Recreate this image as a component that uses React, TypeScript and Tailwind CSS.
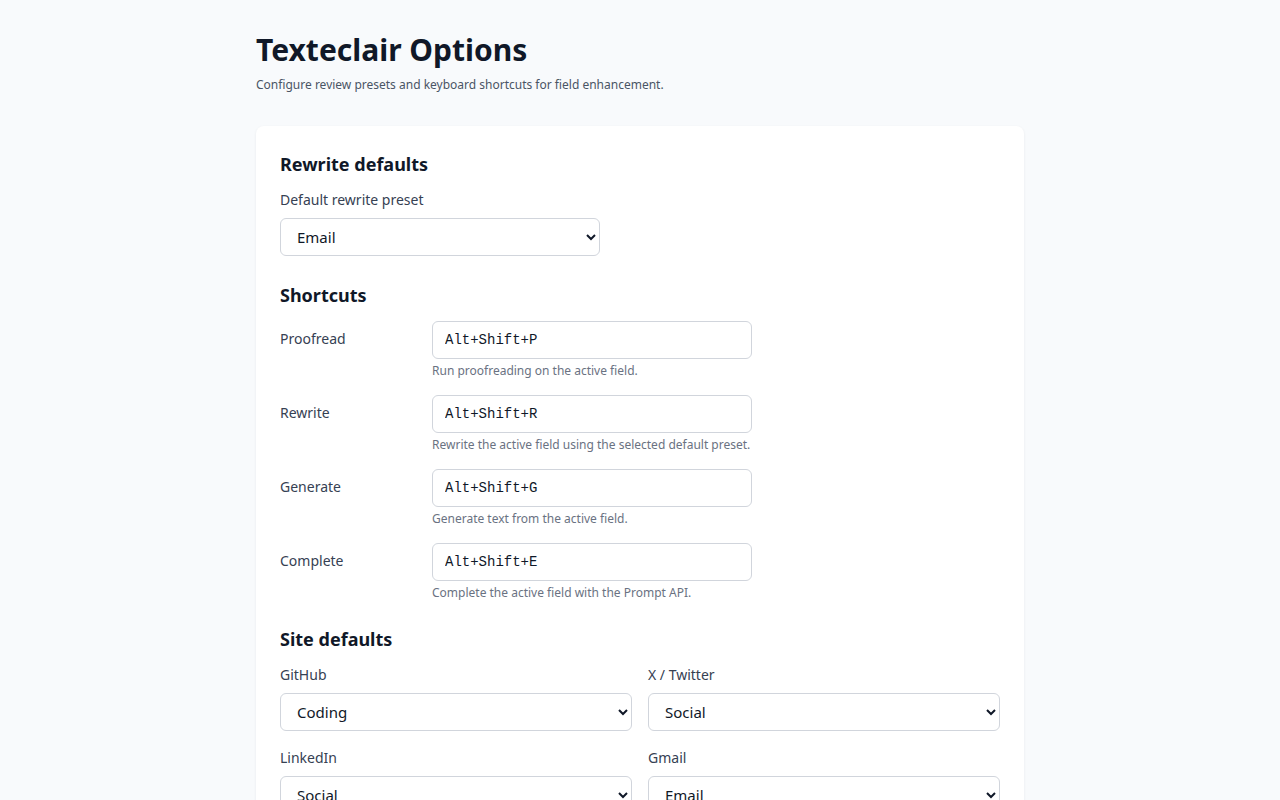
import React, { useState } from 'react';

const PRESETS = ['Email', 'Coding', 'Social', 'Formal', 'Casual'];

const SHORTCUTS = [
  { id: 'proofread', label: 'Proofread', value: 'Alt+Shift+P', help: 'Run proofreading on the active field.' },
  { id: 'rewrite', label: 'Rewrite', value: 'Alt+Shift+R', help: 'Rewrite the active field using the selected default preset.' },
  { id: 'generate', label: 'Generate', value: 'Alt+Shift+G', help: 'Generate text from the active field.' },
  { id: 'complete', label: 'Complete', value: 'Alt+Shift+E', help: 'Complete the active field with the Prompt API.' },
];

const SITES = [
  { id: 'github', label: 'GitHub', value: 'Coding' },
  { id: 'twitter', label: 'X / Twitter', value: 'Social' },
  { id: 'linkedin', label: 'LinkedIn', value: 'Social' },
  { id: 'gmail', label: 'Gmail', value: 'Email' },
];

const selectCls =
  'h-[38px] w-full rounded-md border border-gray-300 bg-white px-3 text-[15px] text-gray-900 outline-none';

function PresetSelect({ value, onChange }: { value: string; onChange: (v: string) => void }) {
  return (
    <select className={selectCls} value={value} onChange={(e) => onChange(e.target.value)}>
      {PRESETS.map((p) => (
        <option key={p} value={p}>
          {p}
        </option>
      ))}
    </select>
  );
}

export default function App() {
  const [rewritePreset, setRewritePreset] = useState('Email');
  const [shortcuts, setShortcuts] = useState<Record<string, string>>(
    Object.fromEntries(SHORTCUTS.map((s) => [s.id, s.value]))
  );
  const [sites, setSites] = useState<Record<string, string>>(
    Object.fromEntries(SITES.map((s) => [s.id, s.value]))
  );

  return (
    <div className="min-h-screen bg-[#f8fafc] font-['Noto_Sans',sans-serif] text-gray-900">
      <div className="mx-auto max-w-[768px] pt-[32px] pb-10">
        <h1 className="text-[30px] font-bold leading-[36px] text-gray-900">Texteclair Options</h1>
        <p className="mt-[9px] text-[12px] leading-4 text-gray-600">
          Configure review presets and keyboard shortcuts for field enhancement.
        </p>

        <div className="mt-[33px] rounded-lg bg-white p-6 shadow-[0_1px_3px_rgba(15,23,42,0.07)]">
          {/* Rewrite defaults */}
          <section>
            <h2 className="text-lg font-bold leading-7">Rewrite defaults</h2>
            <label className="mt-3 block text-sm leading-5 text-gray-700">Default rewrite preset</label>
            <div className="mt-2 w-[320px]">
              <PresetSelect value={rewritePreset} onChange={setRewritePreset} />
            </div>
          </section>

          {/* Shortcuts */}
          <section className="mt-[25px]">
            <h2 className="text-lg font-bold leading-7">Shortcuts</h2>
            <div className="mt-3 flex flex-col gap-4">
              {SHORTCUTS.map((s) => (
                <div key={s.id} className="grid grid-cols-[140px_320px] items-start gap-x-3">
                  <label className="pt-[8px] text-sm leading-5 text-gray-700">{s.label}</label>
                  <div>
                    <input
                      className="h-[38px] w-full rounded-md border border-gray-300 bg-white px-3 font-['Liberation_Mono',monospace] text-sm text-gray-900 outline-none"
                      value={shortcuts[s.id]}
                      onChange={(e) => setShortcuts({ ...shortcuts, [s.id]: e.target.value })}
                    />
                    <p className="mt-1 text-xs leading-4 text-gray-500">{s.help}</p>
                  </div>
                </div>
              ))}
            </div>
          </section>

          {/* Site defaults */}
          <section className="mt-6">
            <h2 className="text-lg font-bold leading-7">Site defaults</h2>
            <div className="mt-3 grid grid-cols-2 gap-x-4 gap-y-[17px]">
              {SITES.map((s) => (
                <div key={s.id}>
                  <label className="block text-sm leading-5 text-gray-700">{s.label}</label>
                  <div className="mt-2">
                    <PresetSelect value={sites[s.id]} onChange={(v) => setSites({ ...sites, [s.id]: v })} />
                  </div>
                </div>
              ))}
            </div>
          </section>
        </div>
      </div>
    </div>
  );
}
